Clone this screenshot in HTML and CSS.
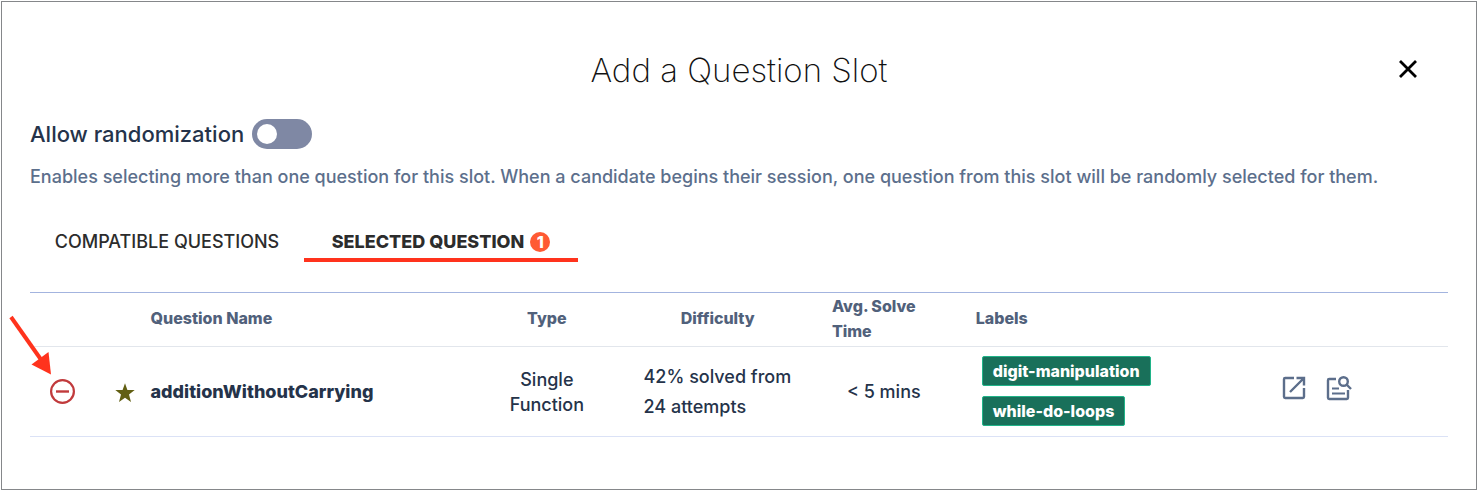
FILE: index.html
```
<!DOCTYPE html>
<html lang="en">
<head>
    <meta charset="UTF-8">
    <meta name="viewport" content="width=device-width, initial-scale=1.0">
    <title>Add a Question Slot</title>
    <link rel="stylesheet" href="styles.css">
</head>
<body>
    <main class="modal">
        <header class="modal-header">
            <h1>Add a Question Slot</h1>
            <button type="button" class="icon-button" aria-label="Close">
                <svg width="20" height="20" viewBox="0 0 20 20" fill="none" stroke="#000" stroke-width="2.8"><path d="M2 1l16 16M18 1L2 17"/></svg>
            </button>
        </header>

        <div class="randomize">
            <label for="randomize">Allow randomization</label>
            <input type="checkbox" id="randomize" class="switch" role="switch">
        </div>
        <p class="hint">Enables selecting more than one question for this slot. When a candidate begins their session, one question from this slot will be randomly selected for them.</p>

        <nav class="tabs">
            <a href="#compatible" class="tab">COMPATIBLE QUESTIONS</a>
            <a href="#selected" class="tab active">SELECTED QUESTION <span class="count">1</span></a>
        </nav>

        <div class="table-wrap" id="selected">
            <table>
                <colgroup>
                    <col class="col-remove">
                    <col class="col-star">
                    <col class="col-name">
                    <col class="col-type">
                    <col class="col-difficulty">
                    <col class="col-time">
                    <col class="col-labels">
                    <col class="col-actions">
                </colgroup>
                <thead>
                    <tr>
                        <th></th>
                        <th></th>
                        <th>Question Name</th>
                        <th class="center">Type</th>
                        <th class="center">Difficulty</th>
                        <th class="time-head">Avg. Solve<br>Time</th>
                        <th>Labels</th>
                        <th></th>
                    </tr>
                </thead>
                <tbody>
                    <tr>
                        <td class="center">
                            <button type="button" class="icon-button" aria-label="Remove question">
                                <svg width="26" height="26" viewBox="0 0 26 26" fill="none" stroke="#c13a3c"><circle cx="12.5" cy="12.5" r="11.4" stroke-width="2.2"/><path d="M6 12.5h13" stroke-width="2.4"/></svg>
                            </button>
                        </td>
                        <td class="center star">
                            <svg width="20" height="20" viewBox="0 0 20 20" fill="#625f13"><path d="M10 .3l2.400 6.600 7.300.2-5.700 4.500 2 7.400-6-4.200-6 4.200 2-7.400L.3 7.100l7.300-.2z"/></svg>
                        </td>
                        <td class="name">additionWithoutCarrying</td>
                        <td class="center">Single<br>Function</td>
                        <td><div class="solved">42% solved from<br>24 attempts</div></td>
                        <td class="time">&lt; 5 mins</td>
                        <td>
                            <div class="labels">
                                <span class="label">digit-manipulation</span>
                                <span class="label">while-do-loops</span>
                            </div>
                        </td>
                        <td>
                            <div class="actions">
                                <button type="button" class="icon-button" aria-label="Open question">
                                    <svg width="26" height="26" viewBox="0 0 26 26" fill="none" stroke="#5c6e8b" stroke-width="2.4"><path d="M12 2H3.200Q2 2 2 3.200V20.800Q2 22 3.200 22H20.800Q22 22 22 20.800V12M14.500 2H22V9.500M22 2L8 16"/></svg>
                                </button>
                                <button type="button" class="icon-button" aria-label="Preview question">
                                    <svg width="26" height="26" viewBox="0 0 26 26" fill="none" stroke="#5c6e8b" stroke-width="2.400"><path d="M10 3H3.200Q2 3 2 4.200V21.800Q2 23 3.200 23H20.800Q22 23 22 21.800V14"/><path d="M6 12.500h7M6 17.500h13" stroke-width="2"/><circle cx="17.500" cy="5.500" r="4.300"/><path d="M20.500 8.500l4.500 4.500"/></svg>
                                </button>
                            </div>
                        </td>
                    </tr>
                </tbody>
            </table>
            <svg class="arrow" width="44" height="62" viewBox="0 0 44 62"><path d="M3 2l31 44" stroke="#ff331d" stroke-width="4" fill="none"/><path d="M43 59.500L23.500 49.500 40.500 37z" fill="#ff331d"/></svg>
        </div>
    </main>
</body>
</html>
```
FILE: styles.css
```
* {
    box-sizing: border-box;
}

body {
    margin: 1px;
    background: #fff;
    color: #25334a;
    font-family: Inter, "Open Sans", sans-serif;
    font-size: 18px;
    font-weight: 500;
}

.modal {
    min-height: calc(100vh - 2px);
    padding: 48px 28px 0;
    border: 1px solid #85878a;
}

.modal-header {
    display: grid;
    grid-template-columns: 1fr auto 1fr;
    align-items: center;
    padding: 0 30px;
}

h1 {
    grid-column: 2;
    margin: 0;
    color: #111;
    font-size: 33px;
    font-weight: 200;
    line-height: 40px;
}

.icon-button {
    display: inline-flex;
    padding: 0;
    border: 0;
    background: none;
    cursor: pointer;
}

.modal-header .icon-button {
    justify-self: end;
}

.randomize {
    display: flex;
    align-items: center;
    gap: 8px;
    margin-top: 29px;
    font-size: 22px;
    line-height: 30px;
}

.switch {
    appearance: none;
    width: 60px;
    height: 30px;
    margin: 0;
    padding: 5px;
    border-radius: 15px;
    background: #7f88a4;
    cursor: pointer;
}

.switch::before {
    content: "";
    display: block;
    width: 20px;
    height: 20px;
    border-radius: 50%;
    background: #fff;
}

.switch:checked::before {
    margin-left: auto;
}

.hint {
    margin: 16px 0 0;
    color: #5c6f8c;
    line-height: 24px;
}

.tabs {
    display: flex;
    margin-top: 37px;
}

.tab {
    display: flex;
    align-items: center;
    justify-content: center;
    gap: 6px;
    flex: 0 0 274px;
    border-bottom: 4px solid transparent;
    color: #2c2c2c;
    line-height: 32px;
    text-decoration: none;
}

.tab.active {
    border-color: #ff331d;
    font-weight: 800;
}

.count {
    width: 20px;
    border-radius: 50%;
    background: #ff5a33;
    color: #fff;
    font-size: 16px;
    line-height: 20px;
    text-align: center;
}

.table-wrap {
    position: relative;
    margin-top: 30px;
}

table {
    width: 100%;
    border-collapse: collapse;
    table-layout: fixed;
}

.col-remove { width: 4.6%; }
.col-star { width: 3.9%; }
.col-name { width: 22.4%; }
.col-type { width: 11.1%; }
.col-difficulty { width: 13%; }
.col-time { width: 11.7%; }
.col-labels { width: 17%; }
.col-actions { width: 16.3%; }

th,
td {
    padding: 0;
    line-height: 25px;
    text-align: left;
}

th {
    height: 54px;
    padding-bottom: 2px;
    border-top: 1px solid #a3b4df;
    border-bottom: 1px solid #e2e6ec;
    color: #51617b;
    font-size: 16px;
    font-weight: 800;
}

td {
    height: 90px;
    border-bottom: 1px solid #dbe2f6;
}

.center {
    text-align: center;
}

td svg,
td .icon-button {
    vertical-align: middle;
}

.star {
    padding-left: 4px;
}

.name {
    font-weight: 800;
}

.solved {
    padding-left: 18px;
    line-height: 30px;
    white-space: nowrap;
}

.time-head {
    padding-left: 22px;
}

.time {
    padding-left: 37px;
}

.labels {
    display: flex;
    flex-direction: column;
    align-items: flex-start;
    gap: 10px;
    padding: 0 0 2px 6px;
}

.label {
    padding: 0 10px;
    border: 1px solid #20b489;
    border-radius: 2px;
    background: #19705a;
    color: #fff;
    font-size: 16px;
    font-weight: 800;
    line-height: 28px;
}

.actions {
    display: flex;
    gap: 18px;
    padding: 0 0 6px 65px;
}

/* points at the remove button */
.arrow {
    position: absolute;
    top: 23px;
    left: -22px;
}
```
